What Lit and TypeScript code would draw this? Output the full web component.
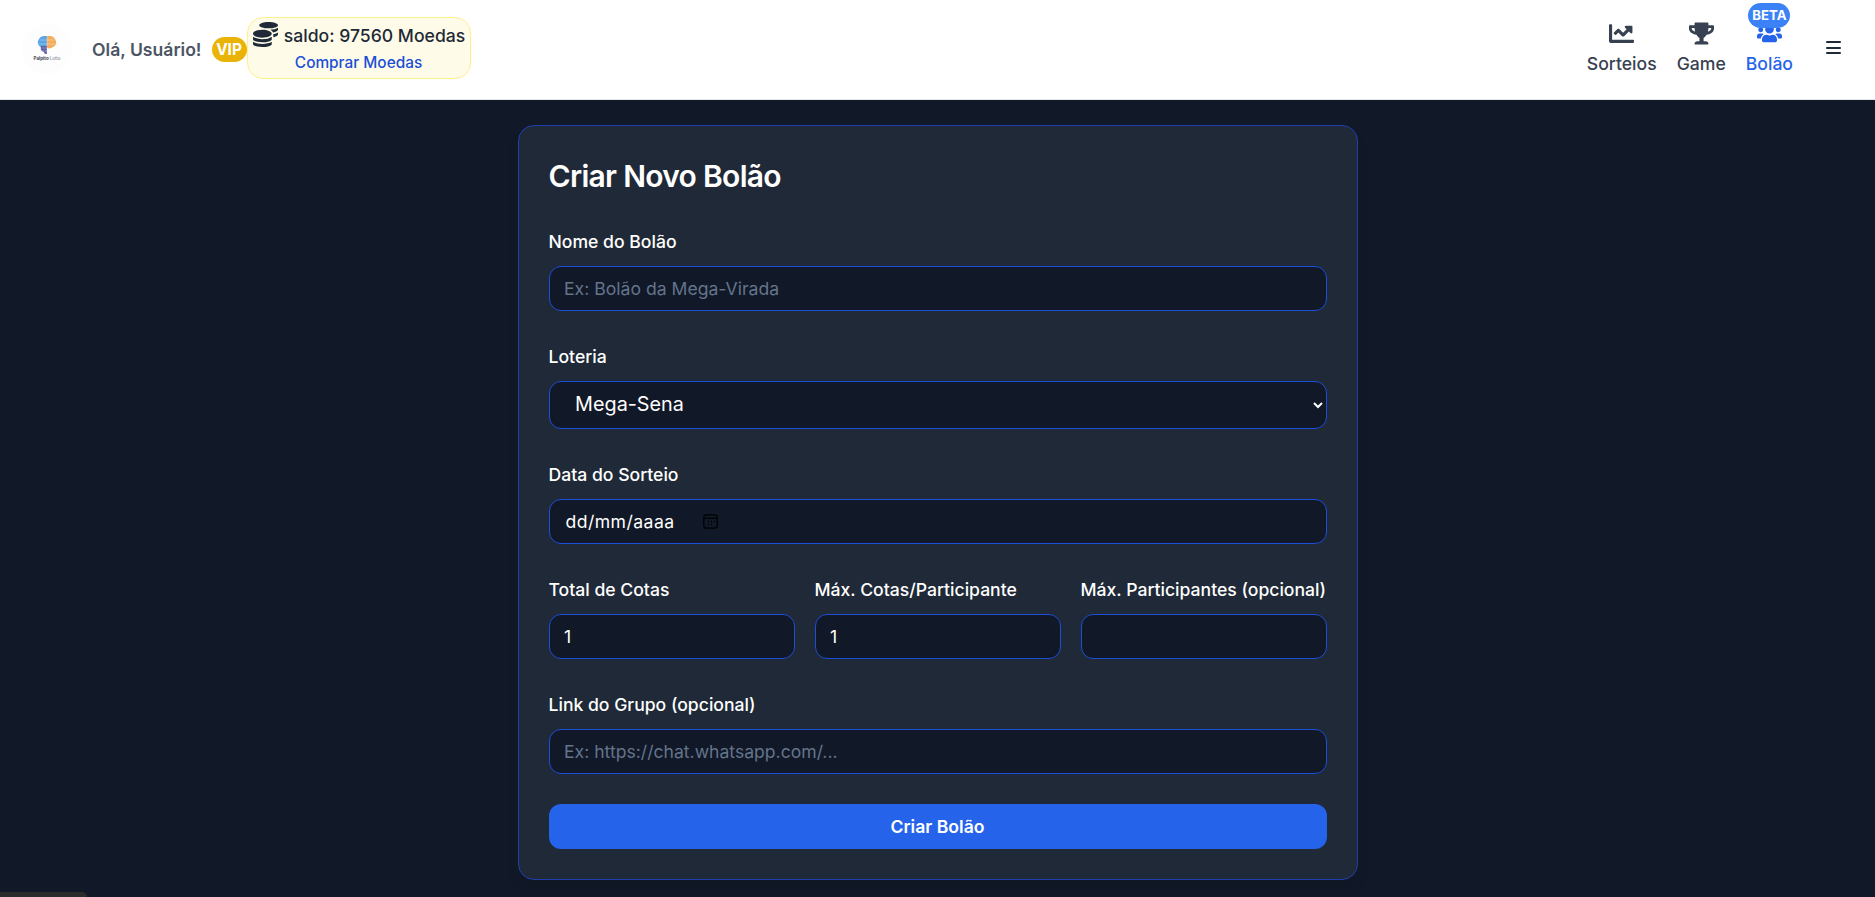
import { LitElement, html, css } from "lit";
import { customElement } from "lit/decorators.js";

const P = {
  coins: "M0 405.3V448c0 35.3 86 64 192 64s192-28.7 192-64v-42.7C342.7 434.4 267.2 448 192 448S41.3 434.4 0 405.3zM320 128c106 0 192-28.7 192-64S426 0 320 0 128 28.7 128 64s86 64 192 64zM0 300.4V352c0 35.3 86 64 192 64s192-28.7 192-64v-51.6c-41.3 34-116.9 51.6-192 51.6S41.3 334.4 0 300.4zm416 11c57.3-11.1 96-31.7 96-55.4v-42.7c-23.2 16.4-57.3 27.6-96 34.5v63.6zM192 160C86 160 0 195.8 0 240s86 80 192 80 192-35.8 192-80-86-80-192-80zm219.3 56.3c60-10.8 100.7-32 100.7-56.3v-42.7c-35.5 25.1-96.5 38.6-160.7 41.8 29.5 14.3 51.2 33.5 60 57.2z",
  chart: "M496 384H64V80c0-8.84-7.16-16-16-16H16C7.16 64 0 71.16 0 80v336c0 17.67 14.33 32 32 32h464c8.84 0 16-7.16 16-16v-32c0-8.84-7.16-16-16-16zM464 96H345.94c-21.38 0-32.09 25.85-16.97 40.97l32.4 32.4L288 242.75l-73.37-73.37c-12.5-12.5-32.76-12.5-45.25 0l-68.69 68.69c-6.25 6.25-6.25 16.38 0 22.63l22.62 22.62c6.25 6.25 16.38 6.25 22.63 0L192 237.25l73.37 73.37c12.5 12.5 32.76 12.5 45.25 0l96-96 32.4 32.4c15.12 15.12 40.97 4.41 40.97-16.97V112c0-8.84-7.16-16-16-16z",
  trophy: "M552 64H448V24c0-13.3-10.7-24-24-24H152c-13.3 0-24 10.7-24 24v40H24C10.7 64 0 74.7 0 88v56c0 35.7 22.5 72.4 61.9 100.7 31.5 22.7 69.8 37.1 110 41.7C203.3 338.5 240 360 240 360v72h-48c-35.3 0-64 20.7-64 56v12c0 6.6 5.4 12 12 12h296c6.6 0 12-5.4 12-12v-12c0-35.3-28.7-56-64-56h-48v-72s36.7-21.5 68.1-73.6c40.3-4.6 78.6-19 110-41.7 39.3-28.3 61.9-65 61.9-100.7V88c0-13.3-10.7-24-24-24zM99.3 192.8C74.9 175.2 64 155.6 64 144v-16h64.2c1 32.6 5.8 61.2 12.8 86.2-15.1-5.2-29.2-12.4-41.7-21.4zM512 144c0 16.1-17.7 36.1-35.3 48.8-12.5 9-26.7 16.2-41.8 21.4 7-25 11.8-53.6 12.8-86.2H512v16z",
  users: "M96 224c35.3 0 64-28.7 64-64s-28.7-64-64-64-64 28.7-64 64 28.7 64 64 64zm448 0c35.3 0 64-28.7 64-64s-28.7-64-64-64-64 28.7-64 64 28.7 64 64 64zm32 32h-64c-17.6 0-33.5 7.1-45.1 18.6 40.3 22.1 68.9 62 75.1 109.4h66c17.7 0 32-14.3 32-32v-32c0-35.3-28.7-64-64-64zm-256 0c61.9 0 112-50.1 112-112S381.9 32 320 32 208 82.1 208 144s50.1 112 112 112zm76.8 32h-8.3c-20.8 10-43.9 16-68.5 16s-47.6-6-68.5-16h-8.3C179.6 288 128 339.6 128 403.2V432c0 26.5 21.5 48 48 48h288c26.5 0 48-21.5 48-48v-28.8c0-63.6-51.6-115.2-115.2-115.2zm-223.7-13.4C161.5 263.1 145.6 256 128 256H64c-35.3 0-64 28.7-64 64v32c0 17.7 14.3 32 32 32h65.9c6.3-47.4 34.9-87.3 75.2-109.4z",
};

@customElement("app-root")
export class AppRoot extends LitElement {
  static styles = css`
    :host {
      display: block;
      min-height: 897px;
      background: #111827;
      font-family: Inter, "Liberation Sans", sans-serif;
      overflow: hidden;
    }
    * { box-sizing: border-box; }
    header {
      height: 100px;
      background: #fff;
      border-bottom: 1px solid #e5e7eb;
      display: flex;
      align-items: center;
      justify-content: space-between;
      padding: 0 34px 4px 22px;
    }
    .left, .nav { display: flex; align-items: center; }
    .logo { width: 50px; height: 50px; display: flex; flex-direction: column; align-items: center; justify-content: center; border-radius: 50%; background: #fdfdfd; margin-top: 2px; }
    .logo svg { display: block; width: 20px; height: 18px; }
    .logo span { font-size: 4.5px; line-height: 6px; color: #374151; font-weight: 700; white-space: nowrap; margin-top: 2px; }
    .logo span i { font-style: normal; font-weight: 400; color: #6b7280; }
    .hello { margin-left: 20px; font-size: 17.6px; font-weight: 600; color: #4b5563; white-space: nowrap; margin-top: 4px; }
    .vip { margin-left: 10px; margin-top: 4px; width: 35px; height: 25px; border-radius: 999px; background: #eab308; color: #fff; font-size: 15.4px; font-weight: 700; display: flex; align-items: center; justify-content: center; }
    .balance { width: 224px; height: 62px; background: #fefce8; border: 1px solid #fef08a; border-radius: 16px; display: flex; flex-direction: column; align-items: center; }
    .saldo { display: flex; align-items: center; gap: 6px; height: 34px; padding-left: 1px; font-size: 17.6px; font-weight: 500; color: #1f2937; white-space: nowrap; }
    .saldo span { padding-top: 1px; }
    .saldo svg { width: 25px; height: 25px; fill: #1f2937; }
    .buy { font-size: 15.4px; font-weight: 500; color: #1d4ed8; line-height: 22px; }
    .nav { gap: 20px; margin-top: 3px; }
    .item { position: relative; display: flex; flex-direction: column; align-items: center; color: #374151; font-size: 17.6px; line-height: 26px; font-weight: 500; }
    .item svg { width: 25px; height: 25px; fill: currentColor; display: block; margin-bottom: 5px; }
    .item.on { color: #2563eb; }
    .beta { position: absolute; top: -18px; left: 50%; transform: translateX(-50%); width: 42px; height: 25px; border-radius: 999px; background: #3b82f6; color: #fff; font-size: 13.2px; line-height: 25px; font-weight: 700; text-align: center; }
    .bars { width: 15px; height: 13px; margin-left: 13px; margin-top: -3px; display: flex; flex-direction: column; justify-content: space-between; }
    .bars i { display: block; height: 2px; background: #1f2937; border-radius: 1px; }
    main { display: flex; justify-content: center; padding-top: 25px; }
    .card {
      width: 840px; height: 755px;
      background: #1f2937;
      border: 1px solid #1e40af;
      border-radius: 16px;
      padding: 30px;
      box-shadow: 0 10px 15px -3px rgba(0,0,0,.1);
      color: #fff;
    }
    h2 { margin: 0 0 33px; font-size: 30px; line-height: 40px; font-weight: 600; letter-spacing: -.7px; }
    .f { display: block; margin-bottom: 33px; }
    label { display: block; font-size: 17.6px; line-height: 26px; font-weight: 500; color: #fff; margin-bottom: 11px; white-space: nowrap; }
    input, select, .ctl {
      display: block; width: 100%; height: 45px;
      background: #111827; color: #fff;
      border: 1px solid #1d4ed8; border-radius: 12px;
      padding: 0 14.5px;
      font: 400 17.6px Inter, "Liberation Sans", sans-serif;
      outline: none;
    }
    input::placeholder { color: #64748b; opacity: 1; }
    select { height: 48px; font-size: 19.8px; padding: 0 12px 2px 21.6px; }
    .ctl { display: flex; align-items: center; letter-spacing: .45px; padding-left: 16px; }
    .ctl svg { width: 15px; height: 15px; margin-left: 28px; }
    .row { display: grid; grid-template-columns: repeat(3, 1fr); gap: 20px; }
    button { display: block; width: 100%; height: 45px; margin-top: 30px; border: 0; border-radius: 12px; background: #2563eb; color: #fff; font: 600 17.6px Inter, "Liberation Sans", sans-serif; }
    .tab { position: fixed; left: 0; bottom: 0; width: 87px; height: 5px; background: #2b2b2b; border-top-right-radius: 6px; }
  `;

  render() {
    return html`
      <header>
        <div class="left">
          <div class="logo">
            <svg viewBox="0 0 20 18">
              <path d="M10 0C7-.5 3 0 1.500 4 0 7 1 10 4 11c1 1 4 1 6 0z" fill="#5aa5e6"/>
              <path d="M10 0c3-.5 7 0 8.500 4C20 7 19 10 16 11c-1 1-4 2-6 1z" fill="#f5ad5c"/>
              <path d="M4 10h6v8c-2 0-3-.5-3-2-2 0-4-3-3-6z" fill="#5b5fa8"/>
              <path d="M10 0v18M3 4h14M1 8h18M5 12h5M5 15h5" stroke="#fff" stroke-width=".5" stroke-opacity=".6" fill="none"/>
            </svg>
            <span>Palpito <i>Lotto</i></span>
          </div>
          <div class="hello">Olá, Usuário!</div>
          <div class="vip">VIP</div>
          <div class="balance">
            <div class="saldo">
              <svg viewBox="0 0 512 512"><path d=${P.coins} /></svg>
              <span>saldo: 97560 Moedas</span>
            </div>
            <div class="buy">Comprar Moedas</div>
          </div>
        </div>
        <nav class="nav">
          <div class="item"><svg viewBox="0 0 512 512"><path d=${P.chart} /></svg>Sorteios</div>
          <div class="item"><svg viewBox="0 0 576 512"><path d=${P.trophy} /></svg>Game</div>
          <div class="item on">
            <span class="beta">BETA</span>
            <svg viewBox="0 0 640 512"><path d=${P.users} /></svg>Bolão
          </div>
          <div class="bars"><i></i><i></i><i></i></div>
        </nav>
      </header>
      <main>
        <section class="card">
          <h2>Criar Novo Bolão</h2>
          <div class="f"><label>Nome do Bolão</label><input placeholder="Ex: Bolão da Mega-Virada" /></div>
          <div class="f"><label>Loteria</label><select><option>Mega-Sena</option></select></div>
          <div class="f">
            <label>Data do Sorteio</label>
            <div class="ctl">dd/mm/aaaa
              <svg viewBox="0 0 15 15" fill="none" stroke="#000" stroke-width="1.200">
                <rect x=".8" y=".8" width="13.400" height="13.400" rx="2.500"/>
                <path d="M.8 4.300h13.400" />
                <path d="M5 7.500h1M8 7.500h1M11 7.500h1M5 10.500h1M8 10.500h1" stroke-width="1.300"/>
              </svg>
            </div>
          </div>
          <div class="f row">
            <div><label>Total de Cotas</label><input value="1" /></div>
            <div><label>Máx. Cotas/Participante</label><input value="1" /></div>
            <div><label>Máx. Participantes (opcional)</label><input /></div>
          </div>
          <div><label>Link do Grupo (opcional)</label><input placeholder="Ex: https://chat.whatsapp.com/..." /></div>
          <button>Criar Bolão</button>
        </section>
      </main>
      <div class="tab"></div>
    `;
  }
}
